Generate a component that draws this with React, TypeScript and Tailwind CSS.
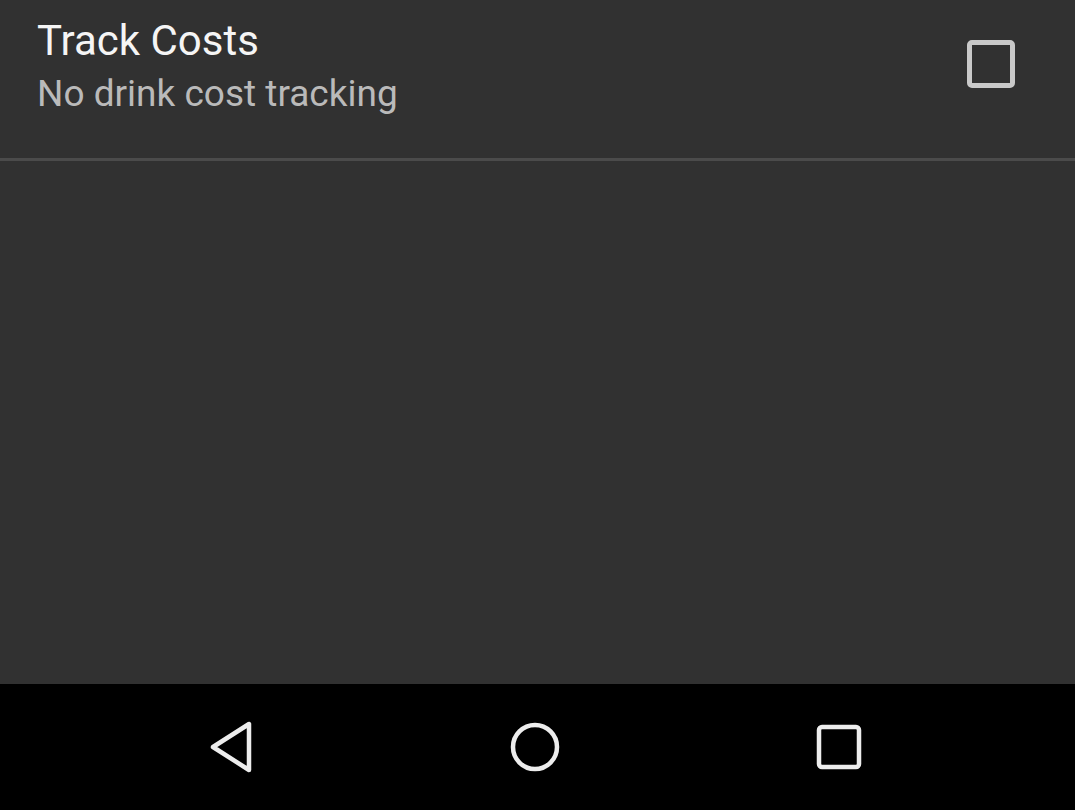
import React from "react";

export default function App() {
  return (
    <div className="w-[1075px] h-[810px] flex flex-col bg-[#313131] overflow-hidden" style={{ fontFamily: "Roboto, 'Noto Sans', sans-serif" }}>
      <div className="h-[158px] flex items-start justify-between pl-[37px] pr-[60px]">
        <div className="flex flex-col pt-[16px]">
          <div className="text-[42px] leading-[50px] text-[#f5f5f5]">Track Costs</div>
          <div className="text-[37px] leading-[50px] text-[#bababa] mt-[3px]">No drink cost tracking</div>
        </div>
        <div className="mt-[40px] w-[48px] h-[48px] rounded-[5px] border-[5px] border-[#c9c9c9]" />
      </div>
      <div className="h-[3px] bg-[#4b4b4b]" />
      <div className="flex-1" />
      <div className="h-[126px] bg-black flex items-center pl-[181px] gap-[204px]">
        <div className="w-[100px] flex justify-center">
          <svg width="50" height="56" viewBox="0 0 50 56">
            <path d="M43 5 L43 51 L7 28 Z" fill="none" stroke="#ededed" strokeWidth="4.5" strokeLinejoin="round" />
          </svg>
        </div>
        <div className="w-[100px] flex justify-center">
          <svg width="52" height="52" viewBox="0 0 52 52">
            <circle cx="26" cy="26" r="22" fill="none" stroke="#ededed" strokeWidth="4.5" />
          </svg>
        </div>
        <div className="w-[100px] flex justify-center">
          <svg width="46" height="46" viewBox="0 0 46 46">
            <rect x="3" y="3" width="40" height="40" rx="3" fill="none" stroke="#ededed" strokeWidth="4.5" />
          </svg>
        </div>
      </div>
    </div>
  );
}
